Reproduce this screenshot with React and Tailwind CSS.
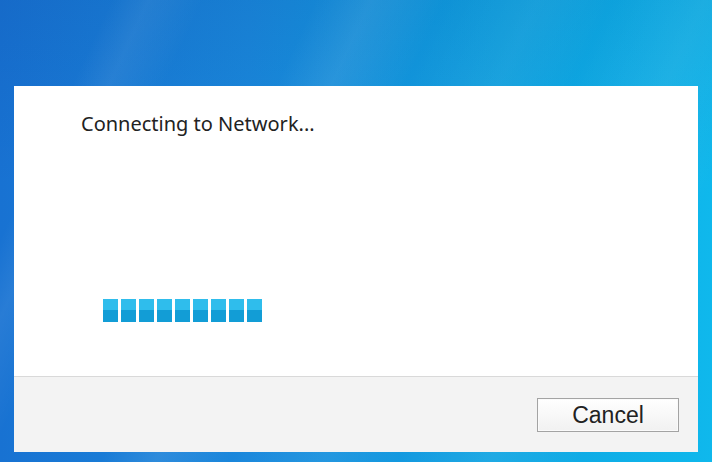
export default function App() {
  const blocks = Array.from({ length: 9 });

  return (
    <div className="relative flex h-[462px] w-[712px] flex-col overflow-hidden bg-[linear-gradient(90deg,#1872d2_0%,#1a88dc_35%,#0ea4e2_70%,#0fb8ec_100%)]">
      {/* diagonal light streaks in the header */}
      <div className="pointer-events-none absolute inset-0 bg-[linear-gradient(115deg,transparent_0%,transparent_12%,rgba(255,255,255,0.07)_16%,transparent_22%,transparent_34%,rgba(255,255,255,0.09)_40%,transparent_48%,rgba(255,255,255,0.06)_58%,transparent_66%,rgba(255,255,255,0.07)_76%,transparent_86%)]" />
      <div className="pointer-events-none absolute inset-0 bg-[linear-gradient(180deg,rgba(0,40,120,0.10)_0%,transparent_40%)]" />

      <div className="h-[86px] shrink-0" />

      <div className="relative mx-[14px] flex flex-1 flex-col">
        <div className="flex flex-1 flex-col border-b border-[#d9d9d9] bg-white">
          <p className="mt-[24px] ml-[67px] font-['Noto_Sans',sans-serif] text-[20px] leading-[27px] text-[#222]">
            Connecting to Network...
          </p>

          <div className="mt-[162px] ml-[89px] flex gap-[3px]">
            {blocks.map((_, i) => (
              <div key={i} className="flex h-[23px] w-[15px] flex-col">
                <div className="h-[11px] bg-[#2fbdec]" />
                <div className="flex-1 bg-[#129dd6]" />
              </div>
            ))}
          </div>
        </div>

        <div className="flex h-[75px] shrink-0 items-start justify-end bg-[#f3f3f3] pr-[19px] pt-[21px]">
          <button
            type="button"
            className="h-[34px] w-[142px] border border-[#a3a3a3] bg-[linear-gradient(180deg,#ffffff_0%,#f1f1f1_100%)] font-['Liberation_Sans',Arial,sans-serif] text-[23px] leading-none text-[#222] shadow-[inset_0_0_0_1px_#fafafa]"
          >
            Cancel
          </button>
        </div>
      </div>

      <div className="h-[10px] shrink-0" />
    </div>
  );
}
